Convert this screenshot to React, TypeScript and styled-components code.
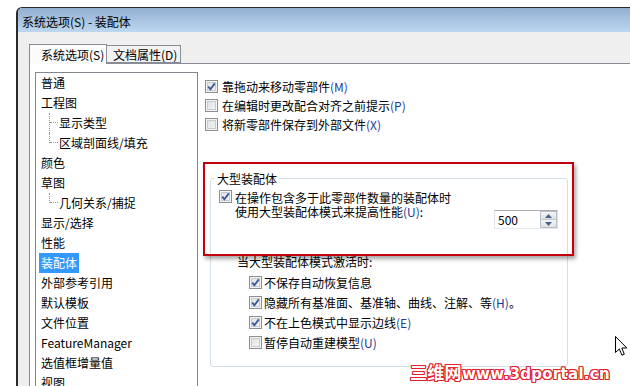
import styled, { createGlobalStyle } from "styled-components";

const GlobalStyle = createGlobalStyle`
  html, body {
    margin: 0;
    padding: 0;
    background: #fff;
  }
  body {
    font-family: "Noto Sans CJK SC", "Noto Sans", sans-serif;
    font-size: 12px;
    color: #000;
  }
  * {
    box-sizing: border-box;
  }
`;

type TreeItem = { label: string; child?: boolean; last?: boolean; selected?: boolean };

const treeItems: TreeItem[] = [
  { label: "普通" },
  { label: "工程图" },
  { label: "显示类型", child: true },
  { label: "区域剖面线/填充", child: true, last: true },
  { label: "颜色" },
  { label: "草图" },
  { label: "几何关系/捕捉", child: true, last: true },
  { label: "显示/选择" },
  { label: "性能" },
  { label: "装配体", selected: true },
  { label: "外部参考引用" },
  { label: "默认模板" },
  { label: "文件位置" },
  { label: "FeatureManager" },
  { label: "选值框增量值" },
  { label: "视图" },
];

const topOptions = [
  { text: "靠拖动来移动零部件", key: "(M)", checked: true },
  { text: "在编辑时更改配合对齐之前提示", key: "(P)", checked: false },
  { text: "将新零部件保存到外部文件", key: "(X)", checked: false },
];

const largeOptions = [
  { text: "不保存自动恢复信息", key: "", checked: true },
  { text: "隐藏所有基准面、基准轴、曲线、注解、等", key: "(H)", tail: "。", checked: true },
  { text: "不在上色模式中显示边线", key: "(E)", checked: true },
  { text: "暂停自动重建模型", key: "(U)", checked: false },
];

const Check = ({ checked }: { checked: boolean }) => (
  <CheckBox>
    {checked && (
      <svg width="11" height="11" viewBox="0 0 11 11">
        <path d="M2.2 5.6 L4.4 8.2 L8.8 2.4" fill="none" stroke="#3c5896" strokeWidth="1.8" />
      </svg>
    )}
  </CheckBox>
);

const App = () => {
  return (
    <Page>
      <GlobalStyle />
      <Window>
        <TitleBar>系统选项(S) - 装配体</TitleBar>
        <Body>
          <TabStrip>
            <Tab $active>系统选项(S)</Tab>
            <Tab>文档属性(D)</Tab>
          </TabStrip>
          <TabPage>
            <Tree>
              {treeItems.map((item) => (
                <TreeRow key={item.label} $child={item.child}>
                  {item.child && <Connector $last={item.last} />}
                  <TreeLabel $selected={item.selected}>{item.label}</TreeLabel>
                </TreeRow>
              ))}
            </Tree>
            <Options>
              {topOptions.map((o) => (
                <CheckRow key={o.text}>
                  <Check checked={o.checked} />
                  <span>
                    {o.text}
                    <Key>{o.key}</Key>
                  </span>
                </CheckRow>
              ))}
              <Group>
                <Legend>大型装配体</Legend>
                <ThresholdRow>
                  <Check checked />
                  <TwoLines>
                    <Line>在操作包含多于此零部件数量的装配体时</Line>
                    <Line>
                      使用大型装配体模式来提高性能<Key>(U)</Key>:
                    </Line>
                  </TwoLines>
                  <Spin>
                    <SpinText>500</SpinText>
                    <SpinButtons>
                      <SpinButton>
                        <svg width="7" height="4" viewBox="0 0 7 4">
                          <path d="M0 4 L3.5 0 L7 4 Z" fill="#4d6185" />
                        </svg>
                      </SpinButton>
                      <SpinButton>
                        <svg width="7" height="4" viewBox="0 0 7 4">
                          <path d="M0 0 L3.5 4 L7 0 Z" fill="#4d6185" />
                        </svg>
                      </SpinButton>
                    </SpinButtons>
                  </Spin>
                </ThresholdRow>
                <SubTitle>当大型装配体模式激活时:</SubTitle>
                <SubList>
                  {largeOptions.map((o) => (
                    <SubRow key={o.text}>
                      <Check checked={o.checked} />
                      <span>
                        {o.text}
                        <Key>{o.key}</Key>
                        {o.tail}
                      </span>
                    </SubRow>
                  ))}
                </SubList>
              </Group>
            </Options>
          </TabPage>
        </Body>
      </Window>
      <Highlight />
      <Watermark>
        <WatermarkCjk>三维网</WatermarkCjk>www.3dportal.cn
      </Watermark>
      <Cursor width="13" height="21" viewBox="0 0 13 21">
        <path
          d="M0.5 0.5 L0.5 16.5 L4.3 12.9 L6.9 19.2 L9.3 18.2 L6.8 12 L11.8 12 Z"
          fill="#fff"
          stroke="#000"
          strokeWidth="1"
          strokeLinejoin="miter"
        />
      </Cursor>
    </Page>
  );
};

const Page = styled.div`
  position: relative;
  width: 630px;
  height: 386px;
  overflow: hidden;
  background: #fff;
  padding: 7px 0 0 16px;
`;

const Window = styled.div`
  height: 420px;
  border-top: 1px solid #2a2a2a;
  border-left: 2px solid #2a2a2a;
  border-top-left-radius: 6px;
  background: #efefef;
  overflow: hidden;
`;

const TitleBar = styled.div`
  height: 24px;
  padding: 2px 0 0 4px;
  display: flex;
  align-items: center;
  background: linear-gradient(#91afd1, #bdd7ef);
  font-size: 12px;
  color: #000;
`;

const Body = styled.div`
  padding-left: 11px;
  display: flex;
  flex-direction: column;
`;

const TabStrip = styled.div`
  height: 31px;
  display: flex;
  align-items: flex-end;
`;

const Tab = styled.div<{ $active?: boolean }>`
  position: relative;
  z-index: ${(p) => (p.$active ? 2 : 1)};
  height: ${(p) => (p.$active ? "20px" : "18px")};
  width: ${(p) => (p.$active ? "78px" : "auto")};
  margin-bottom: ${(p) => (p.$active ? "-1px" : "0")};
  margin-left: ${(p) => (p.$active ? "0" : "-1px")};
  padding: ${(p) => (p.$active ? "0 0 0 11px" : "0 3px 0 6px")};
  display: flex;
  align-items: center;
  border: 1px solid #898c95;
  border-bottom: ${(p) => (p.$active ? "none" : "1px solid #898c95")};
  background: ${(p) => (p.$active ? "#fbfbfb" : "#f2f2f2")};
  font-size: 12px;
  white-space: nowrap;
`;

const TabPage = styled.div`
  display: flex;
  align-items: flex-start;
  border-top: 1px solid #898c95;
  border-left: 1px solid #898c95;
  background: #fff;
  padding: 8px 0 0 5px;
  height: 360px;
`;

const Tree = styled.div`
  width: 163px;
  height: 340px;
  border: 1px solid #828790;
  flex-shrink: 0;
`;

const TreeRow = styled.div<{ $child?: boolean }>`
  height: 20px;
  display: flex;
  align-items: center;
  padding-left: ${(p) => (p.$child ? "13px" : "3px")};
`;

const Connector = styled.span<{ $last?: boolean }>`
  position: relative;
  align-self: flex-start;
  width: 8px;
  height: ${(p) => (p.$last ? "10px" : "20px")};
  border-left: 1px dotted #9a9a9a;
  &::after {
    content: "";
    position: absolute;
    left: 0;
    top: 9px;
    width: 8px;
    border-top: 1px dotted #9a9a9a;
  }
`;

const TreeLabel = styled.span<{ $selected?: boolean }>`
  height: 20px;
  line-height: 20px;
  padding: 0 2px;
  background: ${(p) => (p.$selected ? "#3399ff" : "transparent")};
  color: ${(p) => (p.$selected ? "#fff" : "#000")};
  font-size: 12px;
  white-space: nowrap;
`;

const Options = styled.div`
  margin-left: 7px;
  padding-top: 5px;
  display: flex;
  flex-direction: column;
`;

const CheckRow = styled.div`
  height: 19px;
  display: flex;
  align-items: center;
  gap: 4px;
  font-size: 12px;
  white-space: nowrap;
`;

const CheckBox = styled.span`
  width: 13px;
  height: 13px;
  flex-shrink: 0;
  border: 1px solid #8e8f8f;
  background: #fff;
  box-shadow: inset 0 0 0 1px #f4f4f4, inset 0 0 0 2px #c6cbd2;
  display: flex;
  align-items: center;
  justify-content: center;
  background-image: linear-gradient(135deg, #dcdfe3, #f7f7f7);
`;

const Key = styled.span`
  color: #1b3a98;
`;

const Group = styled.fieldset`
  margin: 37px 0 0 5px;
  padding: 0 0 14px 0;
  width: 358px;
  border: 1px solid #d5dfe5;
  border-radius: 3px;
  min-width: 0;
`;

const Legend = styled.legend`
  margin-left: 4px;
  padding: 0 2px;
  line-height: 15px;
  font-size: 12px;
`;

const ThresholdRow = styled.div`
  margin-top: 4px;
  padding-left: 8px;
  display: flex;
  align-items: flex-start;
  gap: 3px;
`;

const TwoLines = styled.div`
  display: flex;
  flex-direction: column;
  padding-top: 0.5px;
`;

const Line = styled.div`
  height: 14px;
  line-height: 14px;
  font-size: 12px;
  white-space: nowrap;
`;

const Spin = styled.div`
  margin: 20px 9px 0 auto;
  width: 64px;
  height: 19px;
  display: flex;
  border: 1px solid #abadb3;
  border-color: #abadb3 #dbdfe6 #e3e9ef #e2e3ea;
  background: #fff;
`;

const SpinText = styled.div`
  flex: 1;
  padding-left: 3px;
  line-height: 17px;
  font-size: 12px;
`;

const SpinButtons = styled.div`
  width: 17px;
  margin: 0 0 0 2px;
  display: flex;
  flex-direction: column;
  border: 1px solid #b8bdc7;
`;

const SpinButton = styled.div`
  flex: 1;
  display: flex;
  align-items: center;
  justify-content: center;
  background: linear-gradient(#f5f5f5, #dde1e6);
  & + & {
    border-top: 1px solid #c3c8d0;
  }
`;

const SubTitle = styled.div`
  margin-top: 26px;
  padding-left: 26px;
  line-height: 14px;
  font-size: 12px;
`;

const SubList = styled.div`
  margin-top: 3px;
  padding-left: 38px;
  display: flex;
  flex-direction: column;
`;

const SubRow = styled.div`
  height: 20px;
  display: flex;
  align-items: center;
  gap: 2px;
  font-size: 12px;
  white-space: nowrap;
`;

const Highlight = styled.div`
  position: absolute;
  left: 203px;
  top: 162px;
  width: 371px;
  height: 94px;
  border: 2px solid #c3000b;
  box-shadow: 2px 3px 4px rgba(0, 0, 0, 0.35);
  pointer-events: none;
`;

const Watermark = styled.div`
  position: absolute;
  left: 410px;
  top: 362px;
  font-family: "DejaVu Sans", "Noto Sans CJK SC", sans-serif;
  font-weight: bold;
  font-size: 15px;
  line-height: 20px;
  letter-spacing: 0.3px;
  color: #fff;
  white-space: nowrap;
  text-shadow: 1px 0 #e3202c, -1px 0 #e3202c, 0 1px #e3202c, 0 -1px #e3202c,
    1px 1px #e3202c, -1px -1px #e3202c, 1px -1px #e3202c, -1px 1px #e3202c;
`;

const WatermarkCjk = styled.span`
  font-family: "Noto Sans CJK SC", sans-serif;
  font-size: 17px;
`;

const Cursor = styled.svg`
  position: absolute;
  left: 615px;
  top: 336px;
`;

export default App;
